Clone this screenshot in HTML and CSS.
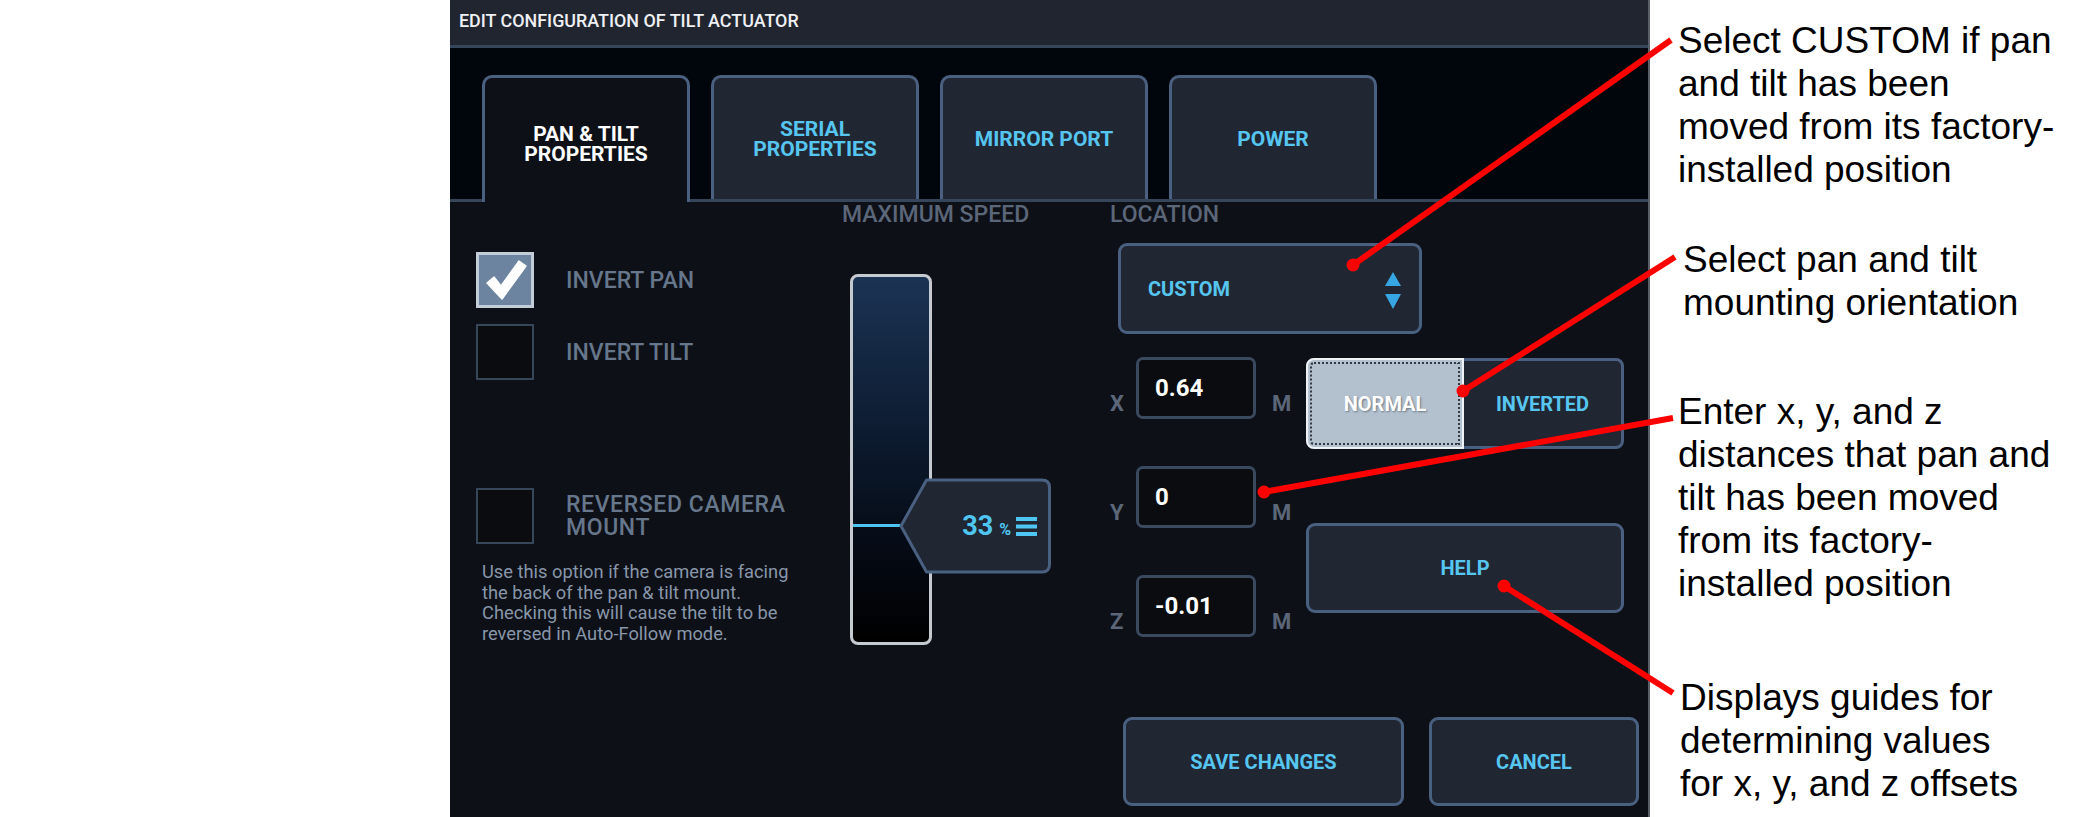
FILE: index.html
```html
<!DOCTYPE html>
<html>
<head>
<meta charset="utf-8">
<title>Edit configuration of tilt actuator</title>
<link rel="stylesheet" href="styles.css">
</head>
<body>
<div class="page">
  <div class="panel">
    <div class="header">EDIT CONFIGURATION OF TILT ACTUATOR</div>
    <div class="tabbar">
      <div class="tab active">PAN &amp; TILT<br>PROPERTIES</div>
      <div class="tab">SERIAL<br>PROPERTIES</div>
      <div class="tab">MIRROR PORT</div>
      <div class="tab">POWER</div>
    </div>
    <div class="content">
      <div class="col-left">
        <div class="check-row">
          <div class="box checked">
            <svg width="52" height="50" viewBox="0 0 52 50"><path d="M8 28 L15 22 L22 31 L40 6 L47 11 L23 44 Z" fill="#ffffff" stroke="#ffffff" stroke-width="1.5" stroke-linejoin="round"/></svg>
          </div>
          <div class="check-label">INVERT PAN</div>
        </div>
        <div class="check-row row2">
          <div class="box"></div>
          <div class="check-label">INVERT TILT</div>
        </div>
        <div class="check-row row3">
          <div class="box"></div>
          <div class="check-label wide">REVERSED CAMERA<br>MOUNT</div>
        </div>
        <p class="desc">Use this option if the camera is facing<br>the back of the pan &amp; tilt mount.<br>Checking this will cause the tilt to be<br>reversed in Auto-Follow mode.</p>
      </div>

      <div class="col-speed">
        <div class="section-label">MAXIMUM SPEED</div>
        <div class="track">
          <div class="track-line"></div>
          <div class="handle">
            <svg class="handle-shape" width="152" height="96" viewBox="0 0 152 96"><path d="M2 48 L27.5 2 H143 Q150.5 2 150.5 9.5 V86.5 Q150.5 94 143 94 H27.5 Z" fill="#212633" stroke="#4a6080" stroke-width="3" stroke-linejoin="round"/></svg>
            <div class="handle-value"><span class="pct-num">33</span><span class="pct-sign">%</span>
              <svg class="menu-icon" width="21" height="19" viewBox="0 0 21 19"><rect x="0" y="0" width="21" height="4" fill="#4fc6f2"/><rect x="0" y="7.5" width="21" height="4" fill="#4fc6f2"/><rect x="0" y="15" width="21" height="4" fill="#4fc6f2"/></svg>
            </div>
          </div>
        </div>
      </div>

      <div class="col-loc">
        <div class="section-label">LOCATION</div>
        <div class="dropdown">
          <span class="btn-text">CUSTOM</span>
          <svg class="updown" width="16" height="37" viewBox="0 0 16 37"><path d="M8 0 L16 14 H0 Z" fill="#37a7e3"/><path d="M0 22 H16 L8 37 Z" fill="#37a7e3"/></svg>
        </div>
        <div class="loc-mid">
          <div class="xyz">
            <div class="axis-row"><span class="axis">X</span><div class="num">0.64</div><span class="unit">M</span></div>
            <div class="axis-row"><span class="axis">Y</span><div class="num">0</div><span class="unit">M</span></div>
            <div class="axis-row"><span class="axis">Z</span><div class="num">-0.01</div><span class="unit">M</span></div>
          </div>
          <div class="loc-right">
            <div class="toggle">
              <div class="opt selected"><span>NORMAL</span></div>
              <div class="opt"><span class="btn-text">INVERTED</span></div>
            </div>
            <div class="btn help"><span class="btn-text">HELP</span></div>
          </div>
        </div>
        <div class="actions">
          <div class="btn save"><span class="btn-text">SAVE CHANGES</span></div>
          <div class="btn cancel"><span class="btn-text">CANCEL</span></div>
        </div>
      </div>
    </div>
  </div>

  <div class="notes">
    <p class="note n1">Select CUSTOM if pan<br>and tilt has been<br>moved from its factory-<br>installed position</p>
    <p class="note n2">Select pan and tilt<br>mounting orientation</p>
    <p class="note n3">Enter x, y, and z<br>distances that pan and<br>tilt has been moved<br>from its factory-<br>installed position</p>
    <p class="note n4">Displays guides for<br>determining values<br>for x, y, and z offsets</p>
  </div>

  <svg class="callouts" width="2100" height="817" viewBox="0 0 2100 817">
    <g stroke="#ff0000" stroke-width="6" fill="none">
      <line x1="1353" y1="265" x2="1671" y2="40"/>
      <line x1="1463" y1="391" x2="1675" y2="257"/>
      <line x1="1264" y1="492" x2="1673" y2="418"/>
      <line x1="1504" y1="586" x2="1673" y2="693"/>
    </g>
    <g fill="#ff0000">
      <circle cx="1353" cy="265" r="6.5"/>
      <circle cx="1463" cy="391" r="6.5"/>
      <circle cx="1264" cy="492" r="6.5"/>
      <circle cx="1504" cy="586" r="6.5"/>
    </g>
  </svg>
</div>
</body>
</html>
```

FILE: styles.css
```css
* { box-sizing: border-box; margin: 0; padding: 0; }

html, body {
  width: 2100px;
  height: 817px;
  background: #ffffff;
  overflow: hidden;
}

body {
  font-family: Roboto, "Liberation Sans", Arial, sans-serif;
}

.page {
  position: relative;
  display: flex;
  width: 2100px;
  height: 817px;
}

/* ---------- panel ---------- */
.panel {
  margin-left: 450px;
  width: 1200px;
  height: 817px;
  display: flex;
  flex-direction: column;
  background: #0d1017;
  border-right: 2px solid #5a6069;
}

.header {
  height: 48px;
  flex: none;
  background: #212530;
  border-bottom: 3px solid #35455a;
  padding: 12px 0 0 9px;
  font-size: 17.9px;
  font-weight: 500;
  line-height: 18px;
  color: #eef0f3;
}

.tabbar {
  height: 154px;
  flex: none;
  display: flex;
  align-items: flex-end;
  gap: 21px;
  padding-left: 32px;
  background: #01050c;
  border-bottom: 3px solid #35455a;
}

.tab {
  width: 208px;
  height: 124px;
  display: flex;
  align-items: center;
  justify-content: center;
  text-align: center;
  background: #212633;
  border: 3px solid #4a6080;
  border-bottom: 0;
  border-radius: 10px 10px 0 0;
  font-weight: 700;
  font-size: 21px;
  line-height: 20px;
  color: #56c6f0;
}

.tab.active {
  height: 127px;
  margin-bottom: -3px;
  padding-top: 8px;
  background: #0d1017;
  color: #ffffff;
}

.content {
  flex: 1;
  display: flex;
}

/* ---------- left column ---------- */
.col-left {
  width: 392px;
  padding: 50px 0 0 26px;
}

.check-row {
  display: flex;
  align-items: center;
  gap: 32px;
}

.check-row.row2 { margin-top: 16px; }
.check-row.row3 { margin-top: 108px; }

.box {
  width: 58px;
  height: 56px;
  flex: none;
  background: #0a0c10;
  border: 2px solid #37475a;
}

.box.checked {
  background: #6c849f;
  border: 3px solid #c3cdd8;
}

.box svg { display: block; }

.check-label {
  font-size: 23px;
  font-weight: 500;
  line-height: 23px;
  color: #66768b;
}

.check-label.wide { letter-spacing: 0.6px; }

.desc {
  margin: 18px 0 0 6px;
  font-size: 18.3px;
  line-height: 20.7px;
  color: #8896a9;
}

/* ---------- speed column ---------- */
.col-speed {
  width: 268px;
}

.section-label {
  margin-top: 1px;
  font-size: 23px;
  font-weight: 500;
  line-height: 24px;
  color: #5b6678;
}

.track {
  position: relative;
  margin: 47px 0 0 8px;
  width: 82px;
  height: 371px;
  border: 3px solid #c5cad0;
  border-radius: 8px;
  background: linear-gradient(#1b3354 0%, #0c1a2e 45%, #050a14 75%, #000000 100%);
}

.track-line {
  margin-top: 247px;
  height: 3px;
  background: #4ec3ee;
}

.handle {
  position: absolute;
  left: 46px;
  top: 201px;
  width: 152px;
  height: 96px;
}

.handle-shape {
  position: absolute;
  left: 0;
  top: 0;
}

.handle-value {
  position: relative;
  height: 96px;
  display: flex;
  align-items: center;
  justify-content: flex-end;
  padding-right: 14px;
  color: #4fc6f2;
  font-weight: 700;
}

.pct-num { font-size: 27px; }
.pct-sign { font-size: 16px; margin: 6px 5px 0 6px; }
.menu-icon { display: block; }

/* ---------- location column ---------- */
.col-loc {
  flex: 1;
}

.btn-text {
  font-weight: 700;
  font-size: 20px;
  color: #56c6f0;
}

.dropdown {
  margin: 16px 0 0 8px;
  width: 304px;
  height: 91px;
  display: flex;
  align-items: center;
  justify-content: space-between;
  padding: 0 18px 0 27px;
  background: #212633;
  border: 3px solid #4a6080;
  border-radius: 9px;
}

.updown { display: block; margin-top: 3px; }

.loc-mid {
  display: flex;
  margin-top: 23px;
}

.xyz {
  width: 196px;
  display: flex;
  flex-direction: column;
  gap: 47px;
}

.axis-row {
  display: flex;
  align-items: flex-end;
  height: 62px;
}

.axis, .unit {
  font-size: 22px;
  font-weight: 700;
  line-height: 22px;
  margin-bottom: 4px;
  color: #5b6678;
}

.axis { width: 26px; }
.unit { margin-left: 16px; }

.num {
  width: 120px;
  height: 62px;
  display: flex;
  align-items: center;
  padding-left: 16px;
  background: #0a0c10;
  border: 3px solid #3a4a5e;
  border-radius: 7px;
  font-weight: 700;
  font-size: 24px;
  color: #ffffff;
}

.loc-right {
  width: 318px;
  margin-top: 1px;
}

.toggle {
  height: 91px;
  display: flex;
  background: #212633;
  border: 3px solid #4a6080;
  border-radius: 8px;
}

.opt {
  flex: 1;
  display: flex;
  align-items: center;
  justify-content: center;
}

.opt.selected {
  flex: none;
  width: 158px;
  margin: -3px 0 -3px -3px;
  background: #b3c1cf;
  border: 2px solid #eef2f5;
  border-radius: 8px 0 0 8px;
  outline: 2px dotted #333a44;
  outline-offset: -6px;
}

.opt.selected span {
  font-weight: 700;
  font-size: 20px;
  color: #ffffff;
  text-shadow: 1px 1px 2px #6b7784;
}

.btn {
  display: flex;
  align-items: center;
  justify-content: center;
  background: #212633;
  border: 3px solid #4a6080;
  border-radius: 9px;
}

.btn.help {
  margin-top: 74px;
  height: 90px;
}

.actions {
  display: flex;
  gap: 25px;
  margin: 80px 0 0 13px;
}

.btn.save { width: 281px; height: 89px; }
.btn.cancel { width: 210px; height: 89px; }

/* ---------- annotations ---------- */
.notes {
  margin-left: 28px;
  padding-top: 19px;
  font-family: "Liberation Sans", Arial, sans-serif;
  font-size: 37px;
  line-height: 43px;
  color: #000000;
}

.note { white-space: nowrap; }
.n2 { margin-top: 47px; padding-left: 5px; }
.n3 { margin-top: 66px; }
.n4 { margin-top: 71px; padding-left: 2px; }

.callouts {
  position: absolute;
  left: 0;
  top: 0;
  pointer-events: none;
}
```
